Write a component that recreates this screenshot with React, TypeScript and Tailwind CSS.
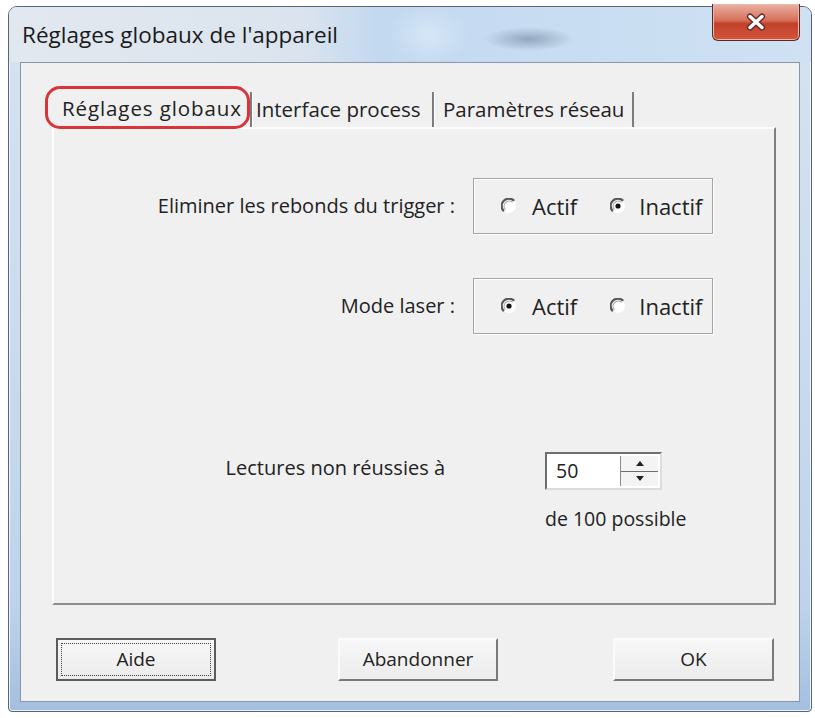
import React from 'react';

const FONT = "font-['Open_Sans','Noto_Sans',sans-serif]";

const Radio: React.FC<{ checked?: boolean; className?: string }> = ({ checked, className }) => (
  <svg width="16" height="16" viewBox="0 0 16 16" className={`shrink-0 ${className ?? ''}`}>
    <circle cx="8" cy="8" r="7" fill="#ffffff" />
    <path d="M2.8 13.2 A7.2 7.2 0 0 1 13.2 2.8" fill="none" stroke="#585858" strokeWidth="2.2" />
    <path d="M4.4 11.6 A5.1 5.1 0 0 1 11.6 4.4" fill="none" stroke="#a9a9a9" strokeWidth="1.2" />
    {checked && <circle cx="8" cy="8" r="2.6" fill="#111111" />}
  </svg>
);

const RadioBox: React.FC<{ actif: boolean }> = ({ actif }) => (
  <div className="ml-[18px] flex h-[56px] w-[240px] items-center border border-[#a5a5a5] pl-[27px] text-[22px] shadow-[inset_1px_1px_0_#ffffff,1px_1px_0_#ffffff]">
    <Radio checked={actif} />
    <span className="ml-[15px]">Actif</span>
    <Radio checked={!actif} className="ml-[33px]" />
    <span className="ml-[13px]">Inactif</span>
  </div>
);

const Button: React.FC<{ label: string; focused?: boolean; className?: string }> = ({
  label,
  focused,
  className
}) => (
  <div
    className={`flex h-[43px] w-[160px] items-center justify-center bg-gradient-to-b from-[#f7f7f7] to-[#ececec] text-[19px] ${
      focused
        ? 'border-2 border-[#5c5c5c] p-[3px]'
        : 'border-2 border-t-[#fbfbfb] border-l-[#fbfbfb] border-r-[#7a7a7a] border-b-[#7a7a7a]'
    } ${className ?? ''}`}
  >
    {focused ? (
      <div className="flex h-full w-full items-center justify-center border border-dotted border-[#444444]">
        {label}
      </div>
    ) : (
      label
    )}
  </div>
);

const SpinBox: React.FC = () => (
  <div className="flex h-[38px] w-[117px] border-2 border-t-[#6e6e6e] border-l-[#6e6e6e] border-r-[#dcdcdc] border-b-[#dcdcdc] bg-white">
    <div className="flex flex-1 items-center pl-[9px]">50</div>
    <div className="my-[2px] mr-[2px] flex w-[38px] flex-col border-l border-[#8a8a8a]">
      <div className="flex flex-1 items-center justify-center border-b border-[#6e6e6e] bg-[#f4f4f4]">
        <svg width="8" height="5" viewBox="0 0 8 5">
          <path d="M0 5 L4 0 L8 5 Z" fill="#222" />
        </svg>
      </div>
      <div className="flex flex-1 items-center justify-center bg-[#f4f4f4]">
        <svg width="8" height="5" viewBox="0 0 8 5">
          <path d="M0 0 L4 5 L8 0 Z" fill="#222" />
        </svg>
      </div>
    </div>
  </div>
);

const App: React.FC = () => {
  return (
    <div className={`h-[718px] w-[815px] bg-white pl-[8px] pt-[6px] text-[20px] text-[#222222] ${FONT}`}>
      <div className="flex h-[706px] w-[804px] flex-col rounded-t-[9px] rounded-b-[4px] border border-[#56657a] bg-[linear-gradient(180deg,#d6e3f0_0%,#cadcee_45%,#bed3ea_85%,#a3bfe0_100%)] shadow-[inset_0_0_0_1px_#eef4fb]">
        {/* title bar */}
        <div className="flex h-[55px] shrink-0 items-center rounded-t-[8px] bg-[radial-gradient(ellipse_45px_12px_at_520px_32px,#93a8be_0%,transparent_100%),radial-gradient(ellipse_40px_30px_at_420px_28px,#d6e6f6_0%,transparent_100%),linear-gradient(90deg,#e2e8ef_0%,#dbe4ee_36%,#c3d9f0_46%,#c8ddf2_70%,#cfe1f3_100%)] pl-[13px]">
          <span className="text-[22.5px] text-[#1a1a1a]">Réglages globaux de l'appareil</span>
          <div className="ml-auto mr-[11px] mt-[-3px] flex h-[37px] w-[88px] items-center justify-center self-start rounded-b-[6px] border border-t-0 border-[#5b2a25] bg-[linear-gradient(180deg,#eab2a4_0%,#d7705c_45%,#c2412b_55%,#d3563c_100%)] shadow-[inset_0_0_0_1px_#f0b7a8]">
            <svg width="22" height="18" viewBox="0 0 22 18">
              <path d="M5 3.5 L17 14.5 M17 3.5 L5 14.5" stroke="#5a2a24" strokeWidth="6" strokeLinecap="round" />
              <path d="M5 3.5 L17 14.5 M17 3.5 L5 14.5" stroke="#ffffff" strokeWidth="3.4" strokeLinecap="round" />
            </svg>
          </div>
        </div>

        {/* client area */}
        <div className="mx-[11px] flex h-[640px] flex-col border border-[#8796ab] bg-[#f0f0f0]">
          <div className="relative ml-[31px] mt-[26px] w-[724px]">
            <div className="flex h-[38px] items-end text-[20.5px]">
              <div className="flex h-[38px] w-[198px] items-center pl-[10px] tracking-[0.9px]">Réglages globaux</div>
              <div className="flex h-[35px] w-[182px] items-center border-l-2 border-[#7d7d7d] pl-[4px] shadow-[inset_1px_0_0_#ffffff]">
                Interface process
              </div>
              <div className="flex h-[35px] w-[202px] items-center border-x-2 border-[#7d7d7d] pl-[9px] shadow-[inset_1px_0_0_#ffffff]">
                Paramètres réseau
              </div>
            </div>

            {/* annotation ring around the selected tab */}
            <div className="absolute left-[-7px] top-[-3px] h-[43px] w-[205px] rounded-[15px] border-[3px] border-[#d8343a]" />

            <div className="flex h-[478px] flex-col border-2 border-t-[#fdfdfd] border-l-[#fdfdfd] border-r-[#7f7f7f] border-b-[#8d8d8d]">
              <div className="mt-[49px] flex items-center">
                <div className="w-[401px] text-right">Eliminer les rebonds du trigger :</div>
                <RadioBox actif={false} />
              </div>
              <div className="mt-[44px] flex items-center">
                <div className="w-[401px] text-right">Mode laser :</div>
                <RadioBox actif={true} />
              </div>
              <div className="mt-[118px] flex items-start">
                <div className="w-[391px] pt-[1px] text-right">Lectures non réussies à</div>
                <div className="ml-[100px] flex flex-col text-[19.5px]">
                  <SpinBox />
                  <div className="mt-[14px]">de 100 possible</div>
                </div>
              </div>
            </div>
          </div>

          <div className="mt-[33px] flex">
            <Button label="Aide" focused className="ml-[35px]" />
            <Button label="Abandonner" className="ml-[122px]" />
            <Button label="OK" className="ml-[115px] w-[161px]" />
          </div>
        </div>
      </div>
    </div>
  );
};

export default App;
